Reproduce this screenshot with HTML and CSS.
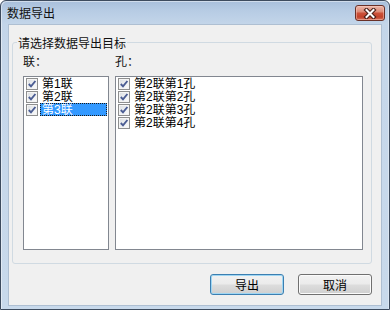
FILE: index.html
```html
<!DOCTYPE html>
<html lang="zh-CN">
<head>
<meta charset="utf-8">
<title>数据导出</title>
<link rel="stylesheet" href="styles.css">
</head>
<body>
<div class="window">
  <div class="titlebar">
    <span class="title">数据导出</span>
    <button class="close" aria-label="关闭">
      <svg width="14" height="11" viewBox="0 0 14 11">
        <path d="M3.5 2 L10.5 9 M10.5 2 L3.5 9" stroke="#4a2019" stroke-width="4.2" stroke-linecap="square" fill="none"/>
        <path d="M3.5 2 L10.5 9 M10.5 2 L3.5 9" stroke="#ffffff" stroke-width="2" stroke-linecap="square" fill="none"/>
      </svg>
    </button>
  </div>
  <div class="client">
    <fieldset class="group">
      <legend class="group-title">请选择数据导出目标</legend>
      <div class="panes">
        <div class="pane-label">联：</div>
        <div class="pane-label">孔：</div>
        <ul class="list">
          <li class="item"><span class="check"><svg viewBox="0 0 10 10"><path d="M1.8 5 L4 7.4 L8.4 2" /></svg></span><span class="label">第1联</span></li>
          <li class="item"><span class="check"><svg viewBox="0 0 10 10"><path d="M1.8 5 L4 7.4 L8.4 2" /></svg></span><span class="label">第2联</span></li>
          <li class="item"><span class="check"><svg viewBox="0 0 10 10"><path d="M1.8 5 L4 7.4 L8.4 2" /></svg></span><span class="label selected">第3联</span></li>
        </ul>
        <ul class="list">
          <li class="item"><span class="check"><svg viewBox="0 0 10 10"><path d="M1.8 5 L4 7.4 L8.4 2" /></svg></span><span class="label">第2联第1孔</span></li>
          <li class="item"><span class="check"><svg viewBox="0 0 10 10"><path d="M1.8 5 L4 7.4 L8.4 2" /></svg></span><span class="label">第2联第2孔</span></li>
          <li class="item"><span class="check"><svg viewBox="0 0 10 10"><path d="M1.8 5 L4 7.4 L8.4 2" /></svg></span><span class="label">第2联第3孔</span></li>
          <li class="item"><span class="check"><svg viewBox="0 0 10 10"><path d="M1.8 5 L4 7.4 L8.4 2" /></svg></span><span class="label">第2联第4孔</span></li>
        </ul>
      </div>
    </fieldset>
    <div class="actions">
      <button class="btn btn-default">导出</button>
      <button class="btn">取消</button>
    </div>
  </div>
</div>
</body>
</html>
```

FILE: styles.css
```css
* { box-sizing: border-box; }

html, body {
  margin: 0;
  padding: 0;
  background: #ffffff;
}

body {
  font-family: "Noto Sans CJK SC", "Noto Sans", sans-serif;
  font-size: 12px;
  color: #000;
}

.window {
  width: 390px;
  height: 310px;
  border: 1px solid #3d4b5e;
  border-radius: 6px 6px 0 0;
  padding: 0 7px 3px 7px;
  display: flex;
  flex-direction: column;
  background: linear-gradient(to bottom, #a8bfdb 0px, #b7cce4 10px, #c3d5e9 23px, #c6d7ea 60px, #c8d9eb 100%);
  box-shadow: inset 1px 1px 0 rgba(255,255,255,0.45), inset -1px 0 0 rgba(255,255,255,0.35);
}

.titlebar {
  height: 23px;
  display: flex;
  align-items: flex-start;
  justify-content: space-between;
  flex: none;
}

.title {
  margin-left: -1px;
  margin-top: 5px;
  font-size: 12px;
  line-height: 14px;
  color: #111;
}

.close {
  margin: 4px -3px 0 0;
  width: 30px;
  height: 16px;
  padding: 0;
  border: 1px solid #6a3027;
  border-radius: 3px;
  background: linear-gradient(to bottom, #ebb7aa 0%, #de8c78 40%, #cc5139 52%, #c2432b 78%, #d4705a 100%);
  box-shadow: inset 0 0 0 1px rgba(255,210,200,0.45);
  display: flex;
  align-items: center;
  justify-content: center;
}

.close svg { display: block; }

.client {
  flex: 1;
  border: 1px solid #aebfd2;
  background: #f0f0f0;
  padding: 10px 9px 10px 3px;
  display: flex;
  flex-direction: column;
}

.group {
  margin: 0;
  padding: 4px 8px 13px 4px;
  border: 1px solid #d0dae2;
  border-radius: 3px;
  min-width: 0;
}

.group-title {
  padding: 0 1px;
  font-size: 12px;
  line-height: 15px;
  color: #111;
}

.panes {
  display: grid;
  grid-template-columns: 86px 248px;
  grid-template-rows: 14px 174px;
  column-gap: 6px;
  row-gap: 8px;
  padding-left: 6px;
}

.pane-label {
  line-height: 14px;
  font-size: 12px;
  color: #111;
}

.list {
  margin: 0;
  padding: 0 1px 0 2px;
  list-style: none;
  background: #fff;
  border: 1px solid #828790;
}

.item {
  height: 13px;
  display: flex;
  align-items: center;
}

.check {
  flex: none;
  width: 12px;
  height: 12px;
  border: 1px solid #8e8f8f;
  background: linear-gradient(135deg, #d9dcdf 0%, #eef0f2 50%, #fafbfb 100%);
  box-shadow: inset 0 0 0 1px #f4f4f4;
  margin-right: 2px;
  display: flex;
  align-items: center;
  justify-content: center;
}

.check svg {
  width: 10px;
  height: 10px;
  display: block;
}

.check path {
  fill: none;
  stroke: #4b5d93;
  stroke-width: 1.9;
}

.label {
  flex: 1;
  height: 13px;
  line-height: 12px;
  padding-left: 1px;
  border: 1px dotted transparent;
  font-family: "Liberation Sans", "Noto Sans CJK SC", sans-serif;
  font-size: 12px;
  white-space: nowrap;
  color: #000;
}

.label.selected {
  background: #3399ff;
  color: #fff;
  border-color: #1a1a1a;
}

.actions {
  margin-top: 10px;
  display: flex;
  justify-content: flex-end;
  gap: 14px;
}

.btn {
  width: 74px;
  height: 21px;
  padding: 0;
  border: 1px solid #707070;
  border-radius: 3px;
  background: linear-gradient(to bottom, #f2f2f2 0%, #ebebeb 48%, #dddddd 52%, #cfcfcf 100%);
  box-shadow: inset 0 0 0 1px #fbfbfb;
  font-family: "Noto Sans CJK SC", "Noto Sans", sans-serif;
  font-size: 12px;
  line-height: 17px;
  color: #000;
}

.btn-default {
  border-color: #3c7fb1;
  box-shadow: inset 0 0 0 1px #9fd6f3;
}
```
